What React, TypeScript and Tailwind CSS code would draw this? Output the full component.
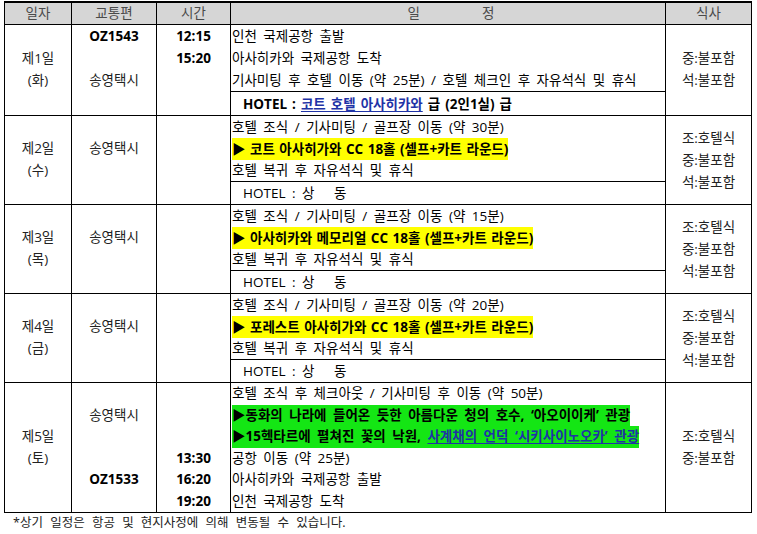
import React from "react";

const Line = ({ children, h = "h-[22px] leading-[22px]", className = "" }: { children?: React.ReactNode; h?: string; className?: string }) => (
  <div className={`${h} whitespace-nowrap ${className}`}>{children}</div>
);

const cell = "border border-black p-0";
const td = `${cell} align-top`;
const center = "text-center";

const Yellow = ({ children }: { children: React.ReactNode }) => (
  <span className="inline-block bg-[#ffff00] font-bold h-[22px] leading-[22px] [word-spacing:1px]">{children}</span>
);

const Green = ({ children }: { children: React.ReactNode }) => (
  <span className="inline-block bg-[#14e614] font-bold h-[21.5px] leading-[21.5px] [word-spacing:3px]">{children}</span>
);

const Blue = ({ children }: { children: React.ReactNode }) => (
  <span className="text-[#1f33a6] underline underline-offset-2">{children}</span>
);

function GolfRow({ day, dow, move, golf }: { day: string; dow: string; move: string; golf: string }) {
  return (
    <tr>
      <td className={`${td} ${center} text-[#222]`}>
        <Line h="h-[22px] leading-[22px]" />
        <Line h="h-[21px] leading-[21px]">{day}</Line>
        <Line>{dow}</Line>
      </td>
      <td className={`${td} ${center} text-[#222]`}>
        <Line />
        <Line h="h-[21px] leading-[21px]">송영택시</Line>
      </td>
      <td className={td}></td>
      <td className={td}>
        <div className="pl-[1px]">
          <Line>{move}</Line>
          <Line h="h-[21px] leading-[21px]">
            <Yellow>▶ {golf}</Yellow>
          </Line>
          <Line>호텔 복귀 후 자유석식 및 휴식</Line>
        </div>
        <div className="border-t border-black h-[23px] leading-[23px] pl-[12px] whitespace-pre">HOTEL : 상   동</div>
      </td>
      <td className={`${cell} ${center} align-middle text-[#222]`}>
        <Line>조:호텔식</Line>
        <Line>중:불포함</Line>
        <Line>석:불포함</Line>
      </td>
    </tr>
  );
}

export default function App() {
  const l5 = "h-[21.5px] leading-[21.5px]";
  return (
    <div className="w-[757px] h-[534px] bg-white text-black font-['Open_Sans','Noto_Sans_CJK_KR',sans-serif] text-[13.5px] [word-spacing:3px] overflow-hidden">
      <table className="ml-[4px] mt-[1px] border-collapse table-fixed w-[747px]">
        <colgroup>
          <col className="w-[67px]" />
          <col className="w-[85px]" />
          <col className="w-[74px]" />
          <col className="w-[435px]" />
          <col className="w-[86px]" />
        </colgroup>
        <thead>
          <tr className="bg-[#d6d6d6] text-[#4a4a4a]">
            <th className="border border-black border-t-2 font-normal h-[21px] leading-[21px] p-0">일자</th>
            <th className="border border-black border-t-2 font-normal p-0">교통편</th>
            <th className="border border-black border-t-2 font-normal p-0">시간</th>
            <th className="border border-black border-t-2 font-normal p-0">
              <div className="flex justify-center gap-[62px] pl-[6px]">
                <span>일</span>
                <span>정</span>
              </div>
            </th>
            <th className="border border-black border-t-2 font-normal p-0">식사</th>
          </tr>
        </thead>
        <tbody>
          <tr>
            <td className={`${td} ${center} text-[#222]`}>
              <Line />
              <Line>제1일</Line>
              <Line>(화)</Line>
            </td>
            <td className={`${td} ${center} text-[#222]`}>
              <Line className="font-bold text-black">OZ1543</Line>
              <Line />
              <Line>송영택시</Line>
            </td>
            <td className={`${td} ${center}`}>
              <Line className="font-bold">12:15</Line>
              <Line className="font-bold">15:20</Line>
            </td>
            <td className={td}>
              <div className="pl-[1px]">
                <Line>인천 국제공항 출발</Line>
                <Line>아사히카와 국제공항 도착</Line>
                <Line>기사미팅 후 호텔 이동 (약 25분) / 호텔 체크인 후 자유석식 및 휴식</Line>
              </div>
              <div className="border-t border-black h-[24px] leading-[24px] pl-[12px] font-bold whitespace-nowrap [word-spacing:1.5px]">
                HOTEL : <Blue>코트 호텔 아사히카와</Blue> 급 (2인1실) 급
              </div>
            </td>
            <td className={`${td} ${center} text-[#222]`}>
              <Line />
              <Line>중:불포함</Line>
              <Line>석:불포함</Line>
            </td>
          </tr>
          <GolfRow day="제2일" dow="(수)" move="호텔 조식 / 기사미팅 / 골프장 이동 (약 30분)" golf="코트 아사히가와 CC 18홀 (셀프+카트 라운드)" />
          <GolfRow day="제3일" dow="(목)" move="호텔 조식 / 기사미팅 / 골프장 이동 (약 15분)" golf="아사히카와 메모리얼 CC 18홀 (셀프+카트 라운드)" />
          <GolfRow day="제4일" dow="(금)" move="호텔 조식 / 기사미팅 / 골프장 이동 (약 20분)" golf="포레스트 아사히가와 CC 18홀 (셀프+카트 라운드)" />
          <tr>
            <td className={`${td} ${center} text-[#222]`}>
              <Line h={l5} />
              <Line h={l5} />
              <Line h={l5}>제5일</Line>
              <Line h={l5}>(토)</Line>
            </td>
            <td className={`${td} ${center} text-[#222]`}>
              <Line h={l5} />
              <Line h={l5}>송영택시</Line>
              <Line h={l5} />
              <Line h={l5} />
              <Line h={l5} className="font-bold text-black">OZ1533</Line>
            </td>
            <td className={`${td} ${center}`}>
              <Line h={l5} />
              <Line h={l5} />
              <Line h={l5} />
              <Line h={l5} className="font-bold">13:30</Line>
              <Line h={l5} className="font-bold">16:20</Line>
              <Line h={l5} className="font-bold">19:20</Line>
            </td>
            <td className={td}>
              <div className="pl-[1px]">
                <Line h={l5}>호텔 조식 후 체크아웃 / 기사미팅 후 이동 (약 50분)</Line>
                <Line h={l5}>
                  <Green>▶동화의 나라에 들어온 듯한 아름다운 청의 호수, ‘아오이이케’ 관광</Green>
                </Line>
                <Line h={l5}>
                  <Green>
                    ▶15헥타르에 펼쳐진 꽃의 낙원, <Blue>사계채의 언덕 ‘시키사이노오카’ 관광</Blue>
                  </Green>
                </Line>
                <Line h={l5}>공항 이동 (약 25분)</Line>
                <Line h={l5}>아사히카와 국제공항 출발</Line>
                <Line h={l5}>인천 국제공항 도착</Line>
              </div>
            </td>
            <td className={`${td} ${center} text-[#222]`}>
              <Line h={l5} />
              <Line h={l5} />
              <Line h={l5}>조:호텔식</Line>
              <Line h={l5}>중:불포함</Line>
            </td>
          </tr>
        </tbody>
      </table>
      <p className="ml-[13px] mt-[1px] text-[12.5px] leading-[18px] text-[#222] [word-spacing:4px]">*상기 일정은 항공 및 현지사정에 의해 변동될 수 있습니다.</p>
    </div>
  );
}
